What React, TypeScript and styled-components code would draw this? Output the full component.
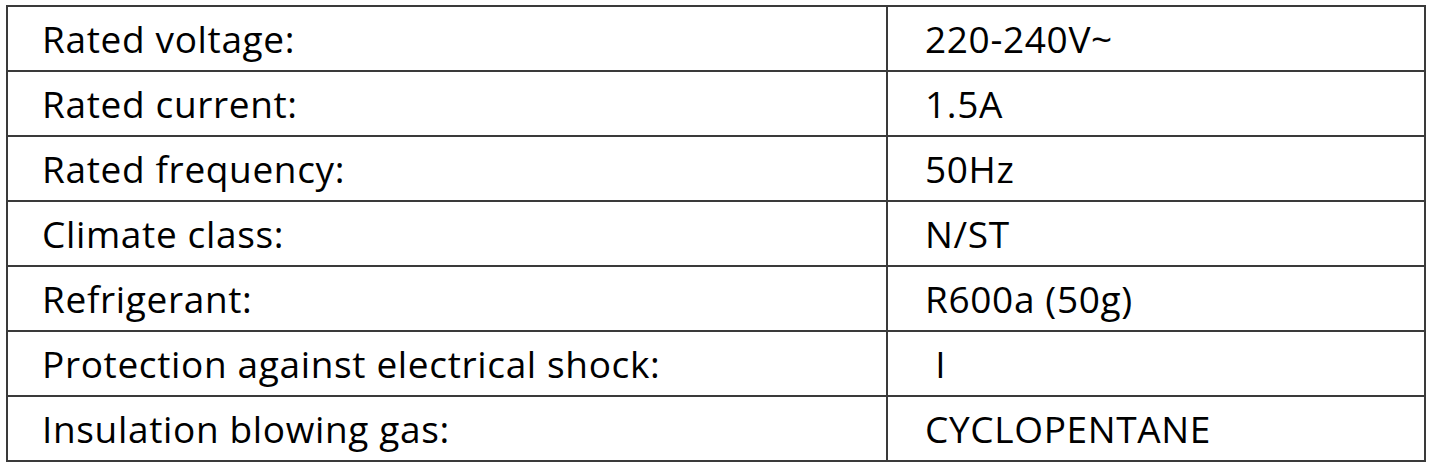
import * as React from 'react';
import styled, { createGlobalStyle } from 'styled-components';

const GlobalStyle = createGlobalStyle`
  html, body {
    margin: 0;
    padding: 0;
    background: #ffffff;
  }
`;

const Page = styled.div`
  padding: 5px 0 0 6px;
  width: 1439px;
  height: 468px;
  box-sizing: border-box;
`;

const SpecTable = styled.table`
  border-collapse: collapse;
  width: 1420px;
  font-family: 'Open Sans', 'Liberation Sans', sans-serif;
  font-size: 37px;
  letter-spacing: 0.65px;
  color: #000;
  table-layout: fixed;
`;

const Cell = styled.td<{ $value?: boolean }>`
  border: 2px solid #3a3a3a;
  height: 65px;
  padding: 0 0 0 ${(p) => (p.$value ? '37px' : '34px')};
  box-sizing: border-box;
  vertical-align: middle;
  white-space: nowrap;
  line-height: 1;
`;

const rows: [string, string][] = [
  ['Rated voltage:', '220-240V~'],
  ['Rated current:', '1.5A'],
  ['Rated frequency:', '50Hz'],
  ['Climate class:', 'N/ST'],
  ['Refrigerant:', 'R600a (50g)'],
  ['Protection against electrical shock:', '\u00a0I'],
  ['Insulation blowing gas:', 'CYCLOPENTANE'],
];

export default function App() {
  return (
    <Page>
      <GlobalStyle />
      <SpecTable>
        <colgroup>
          <col style={{ width: 880 }} />
          <col />
        </colgroup>
        <tbody>
          {rows.map(([label, value]) => (
            <tr key={label}>
              <Cell>{label}</Cell>
              <Cell $value>{value}</Cell>
            </tr>
          ))}
        </tbody>
      </SpecTable>
    </Page>
  );
}
